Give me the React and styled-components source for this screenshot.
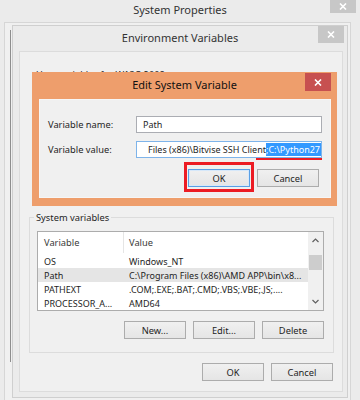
import React from "react";
import styled, { createGlobalStyle } from "styled-components";

const GlobalStyle = createGlobalStyle`
  html, body {
    margin: 0;
    padding: 0;
    background: #ebebeb;
  }
  body {
    font-family: "Noto Sans", "Open Sans", sans-serif;
    color: #1e1e1e;
  }
  * { box-sizing: border-box; }
`;

const Screen = styled.div`
  position: relative;
  width: 360px;
  height: 400px;
  overflow: hidden;
  background: #ebebeb;
  display: flex;
  flex-direction: column;
`;

const TitleBar = styled.div`
  display: grid;
  grid-template-columns: 1fr auto 1fr;
  align-items: start;
  height: ${(p) => p.$h}px;
  flex-shrink: 0;
`;

const Title = styled.div`
  grid-column: 2;
  font-size: 11px;
  line-height: ${(p) => p.$lh}px;
  color: ${(p) => (p.$active ? "#111" : "#333")};
  white-space: nowrap;
`;

const CloseButton = styled.div`
  grid-column: 3;
  justify-self: end;
  width: 26px;
  height: ${(p) => p.$h}px;
  margin-top: ${(p) => p.$mt || 0}px;
  margin-right: ${(p) => p.$mr}px;
  background: ${(p) => (p.$red ? "#c75050" : "#c7c7c7")};
  display: flex;
  align-items: center;
  justify-content: center;
`;

const SysBody = styled.div`
  flex: 1;
  margin-left: 4px;
  width: 347px;
  border: 1px solid #d6d6d6;
  border-bottom: none;
  background: #f0f0f0;
  display: flex;
  align-items: flex-start;
  padding-top: 2px;
`;

const TabEdge = styled.div`
  width: 1px;
  height: 332px;
  margin: 5px 0 0 5px;
  background: #8e8e8e;
`;

const EnvWindow = styled.div`
  margin-left: 1px;
  width: 336px;
  height: 373px;
  border: 1px solid #cfcfcf;
  background: #ebebeb;
  display: flex;
  flex-direction: column;
`;

const EnvClient = styled.div`
  flex: 1;
  margin: 0 4px 5px 6px;
  border: 1px solid #dcdcdc;
  background: #f0f0f0;
  display: flex;
  flex-direction: column;
`;

const Group = styled.fieldset`
  margin: ${(p) => p.$mt}px 8px 0 9px;
  width: 305px;
  height: ${(p) => (p.$h ? `${p.$h}px` : "auto")};
  border: 1px solid ${(p) => (p.$bare ? "transparent" : "#dcdcdc")};
  padding: 7px 9px 13px 7px;
  min-width: 0;
`;

const Legend = styled.legend`
  font-size: 9.3px;
  line-height: 13px;
  padding: 0 2px;
  margin-left: -3px;
  color: #1e1e1e;
`;

const ListBox = styled.div`
  width: 287px;
  height: 80px;
  border: 1px solid #acacac;
  background: #fff;
  display: flex;
`;

const ListMain = styled.div`
  flex: 1;
  min-width: 0;
  display: flex;
  flex-direction: column;
  font-size: 9px;
`;

const HeaderRow = styled.div`
  display: grid;
  grid-template-columns: 86px 1fr;
  height: 21px;
  margin-bottom: 1px;
`;

const HeaderCell = styled.div`
  display: flex;
  align-items: center;
  padding-left: ${(p) => p.$pl}px;
  font-size: 9.3px;
  color: #3a3a3a;
  border-right: ${(p) => (p.$sep ? "1px solid #e5e5e5" : "none")};
`;

const Row = styled.div`
  display: grid;
  grid-template-columns: 86px 1fr;
  height: 14px;
  align-items: center;
  background: ${(p) => (p.$selected ? "#e5e5e5" : "transparent")};
  white-space: nowrap;
  overflow: hidden;
`;

const Cell = styled.div`
  padding-left: ${(p) => p.$pl}px;
  overflow: hidden;
  color: #1e1e1e;
`;

const ScrollBar = styled.div`
  width: 15px;
  background: #f0f0f0;
  display: flex;
  flex-direction: column;
  align-items: center;
`;

const ScrollArrow = styled.div`
  height: 17px;
  width: 100%;
  display: flex;
  align-items: center;
  justify-content: center;
`;

const ScrollTrack = styled.div`
  flex: 1;
  width: 100%;
  padding: 6px 1px 0;
`;

const Thumb = styled.div`
  height: 15px;
  background: #cdcdcd;
`;

const ButtonRow = styled.div`
  display: flex;
  justify-content: flex-end;
  gap: 7px;
  margin-top: ${(p) => p.$mt}px;
  padding-right: ${(p) => p.$pr || 0}px;
`;

const Button = styled.div`
  position: relative;
  flex-shrink: 0;
  width: 62px;
  height: 18px;
  border: 1px solid ${(p) => (p.$focused ? "#5a9fe4" : "#acacac")};
  box-shadow: ${(p) => (p.$focused ? "inset 0 0 0 1px #d6e8fa" : "none")};
  background: linear-gradient(#f0f0f0, #e5e5e5);
  display: flex;
  align-items: center;
  justify-content: center;
  font-size: 9.3px;
  color: #1e1e1e;

  ${(p) =>
    p.$marked &&
    `
    &::after {
      content: "";
      position: absolute;
      left: -5px;
      right: -5px;
      top: -8px;
      bottom: -6px;
      border: 3px solid #ec1c24;
    }
  `}
`;

const Dialog = styled.div`
  position: absolute;
  left: 32px;
  top: 72px;
  width: 305px;
  height: 134px;
  background: #ee9e6c;
  display: flex;
  flex-direction: column;
`;

const DialogClient = styled.div`
  flex: 1;
  margin: 0 6px 8px 7px;
  border: 1px solid #f6f6f6;
  background: #f0f0f0;
  padding: 16px 0 0 8px;
  display: flex;
  flex-direction: column;
  gap: 8px;
`;

const FieldRow = styled.div`
  display: grid;
  grid-template-columns: 88px 186px;
  align-items: center;
  height: 17px;
`;

const Label = styled.div`
  font-size: 9.3px;
  color: #1e1e1e;
`;

const TextBox = styled.div`
  position: relative;
  min-width: 0;
  height: 17px;
  border: 1px solid ${(p) => (p.$focused ? "#7eb4ea" : "#abadb3")};
  background: #fff;
  display: flex;
  align-items: center;
  justify-content: ${(p) => (p.$end ? "flex-end" : "flex-start")};
  padding: 0 ${(p) => (p.$end ? 0 : 6)}px 0 6px;
  font-size: 9px;
  white-space: nowrap;
`;

const Clip = styled.div`
  min-width: 0;
  overflow: hidden;
  display: flex;
  justify-content: flex-end;
`;

const Selected = styled.span`
  background: #3399ff;
  color: #fff;
  padding-right: 1px;
`;

const Underline = styled.div`
  position: absolute;
  right: -1px;
  bottom: -3px;
  width: 66px;
  height: 2px;
  background: #ec1c24;
`;

const CrossIcon = () => (
  <svg width="8" height="7" viewBox="0 0 8 7">
    <path d="M1 0.5 L7 6.5 M7 0.5 L1 6.5" stroke="#fff" strokeWidth="1.6" />
  </svg>
);

const Chevron = ({ down }) => (
  <svg width="7" height="5" viewBox="0 0 7 5">
    <path
      d={down ? "M0.5 1 L3.5 4 L6.5 1" : "M0.5 4 L3.5 1 L6.5 4"}
      stroke="#606060"
      strokeWidth="1.2"
      fill="none"
    />
  </svg>
);

const variables = [
  { name: "OS", value: "Windows_NT" },
  { name: "Path", value: "C:\\Program Files (x86)\\AMD APP\\bin\\x8...", selected: true },
  { name: "PATHEXT", value: ".COM;.EXE;.BAT;.CMD;.VBS;.VBE;.JS;...." },
  { name: "PROCESSOR_A...", value: "AMD64" },
];

export default function App() {
  return (
    <Screen>
      <GlobalStyle />
      <TitleBar $h={22}>
        <Title $lh={19}>System Properties</Title>
        <CloseButton $h={13} $mr={4}>
          <CrossIcon />
        </CloseButton>
      </TitleBar>

      <SysBody>
        <TabEdge />
        <EnvWindow>
          <TitleBar $h={25}>
            <Title $lh={24}>Environment Variables</Title>
            <CloseButton $h={17} $mr={3}>
              <CrossIcon />
            </CloseButton>
          </TitleBar>

          <EnvClient>
            <Group $mt={16} $h={138} $bare>
              <Legend>User variables for W13C-2008</Legend>
            </Group>

            <Group $mt={5}>
              <Legend>System variables</Legend>
              <ListBox>
                <ListMain>
                  <HeaderRow>
                    <HeaderCell $pl={6} $sep>
                      Variable
                    </HeaderCell>
                    <HeaderCell $pl={5}>Value</HeaderCell>
                  </HeaderRow>
                  {variables.map((v) => (
                    <Row key={v.name} $selected={v.selected}>
                      <Cell $pl={6}>{v.name}</Cell>
                      <Cell $pl={5}>{v.value}</Cell>
                    </Row>
                  ))}
                </ListMain>
                <ScrollBar>
                  <ScrollArrow>
                    <Chevron />
                  </ScrollArrow>
                  <ScrollTrack>
                    <Thumb />
                  </ScrollTrack>
                  <ScrollArrow>
                    <Chevron down />
                  </ScrollArrow>
                </ScrollBar>
              </ListBox>
              <ButtonRow $mt={10}>
                <Button>New...</Button>
                <Button>Edit...</Button>
                <Button>Delete</Button>
              </ButtonRow>
            </Group>

            <ButtonRow $mt={10} $pr={9}>
              <Button>OK</Button>
              <Button>Cancel</Button>
            </ButtonRow>
          </EnvClient>
        </EnvWindow>
      </SysBody>

      <Dialog>
        <TitleBar $h={27}>
          <Title $lh={26} $active>
            Edit System Variable
          </Title>
          <CloseButton $h={18} $mt={1} $mr={6} $red>
            <CrossIcon />
          </CloseButton>
        </TitleBar>
        <DialogClient>
          <FieldRow>
            <Label>Variable name:</Label>
            <TextBox>Path</TextBox>
          </FieldRow>
          <FieldRow>
            <Label>Variable value:</Label>
            <TextBox $focused $end>
              <Clip>
                <span>Files (x86)\Bitvise SSH Client</span>
                <Selected>;C:\Python27</Selected>
              </Clip>
              <Underline />
            </TextBox>
          </FieldRow>
          <ButtonRow $mt={3} $pr={11}>
            <Button $focused $marked>
              OK
            </Button>
            <Button>Cancel</Button>
          </ButtonRow>
        </DialogClient>
      </Dialog>
    </Screen>
  );
}
